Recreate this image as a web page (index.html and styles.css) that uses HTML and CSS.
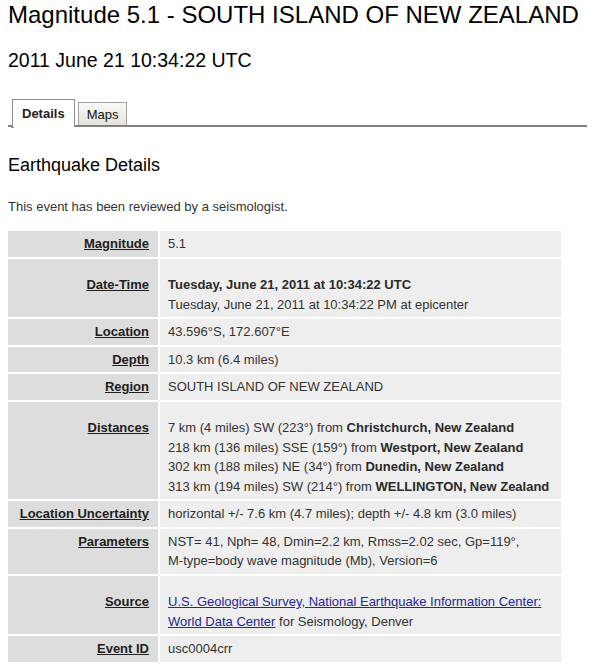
FILE: index.html
```html
<!DOCTYPE html>
<html lang="en">
<head>
<meta charset="utf-8">
<title>Magnitude 5.1 - SOUTH ISLAND OF NEW ZEALAND</title>
<link rel="stylesheet" href="styles.css">
</head>
<body>
<h1 class="title">Magnitude 5.1 - SOUTH ISLAND OF NEW ZEALAND</h1>
<h2 class="subtitle">2011 June 21 10:34:22 UTC</h2>

<div class="tabs">
  <span class="tab tab-active">Details</span>
  <span class="tab">Maps</span>
</div>

<h3 class="section">Earthquake Details</h3>
<p class="note">This event has been reviewed by a seismologist.</p>

<div class="details">
  <div class="label"><a href="#">Magnitude</a></div>
  <div class="value">5.1</div>

  <div class="label spaced"><a href="#">Date-Time</a></div>
  <div class="value spaced"><b>Tuesday, June 21, 2011 at 10:34:22 UTC</b><br>Tuesday, June 21, 2011 at 10:34:22 PM at epicenter</div>

  <div class="label"><a href="#">Location</a></div>
  <div class="value">43.596°S, 172.607°E</div>

  <div class="label"><a href="#">Depth</a></div>
  <div class="value">10.3 km (6.4 miles)</div>

  <div class="label"><a href="#">Region</a></div>
  <div class="value">SOUTH ISLAND OF NEW ZEALAND</div>

  <div class="label spaced"><a href="#">Distances</a></div>
  <div class="value spaced">7 km (4 miles) SW (223°) from <b>Christchurch, New Zealand</b><br>218 km (136 miles) SSE (159°) from <b>Westport, New Zealand</b><br>302 km (188 miles) NE (34°) from <b>Dunedin, New Zealand</b><br>313 km (194 miles) SW (214°) from <b>WELLINGTON, New Zealand</b></div>

  <div class="label"><a href="#">Location Uncertainty</a></div>
  <div class="value">horizontal +/- 7.6 km (4.7 miles); depth +/- 4.8 km (3.0 miles)</div>

  <div class="label"><a href="#">Parameters</a></div>
  <div class="value">NST= 41, Nph= 48, Dmin=2.2 km, Rmss=2.02 sec, Gp=119°,<br>M-type=body wave magnitude (Mb), Version=6</div>

  <div class="label spaced"><a href="#">Source</a></div>
  <div class="value spaced"><a class="link" href="#">U.S. Geological Survey, National Earthquake Information Center:</a><br><a class="link" href="#">World Data Center</a> for Seismology, Denver</div>

  <div class="label"><a href="#">Event ID</a></div>
  <div class="value">usc0004crr</div>
</div>
</body>
</html>
```

FILE: styles.css
```css
html, body {
  background: #ffffff;
}

body {
  margin: 0 8px;
  font-family: "Liberation Sans", Arial, sans-serif;
  font-size: 13px;
  color: #333333;
}

.title {
  margin: 0;
  padding-top: 1px;
  font-size: 24px;
  font-weight: normal;
  line-height: 28px;
  color: #000000;
}

.subtitle {
  margin: 19px 0 0;
  font-size: 19.5px;
  font-weight: normal;
  line-height: 24px;
  color: #000000;
}

.tabs {
  margin: 27px -8px 0 0;
  display: flex;
  align-items: flex-end;
  padding-left: 4px;
  border-bottom: 2px solid #808080;
  height: 26px;
}

.tab {
  display: block;
  margin-left: 3px;
  padding: 2px 8px 0;
  line-height: 20px;
  border: 1px solid #a3a3a3;
  border-bottom: none;
  background: linear-gradient(#f9f9f6, #e4e4dc);
  color: #111111;
}

.tab-active {
  position: relative;
  margin-left: 0;
  margin-bottom: -2px;
  padding: 4px 9px 3px;
  font-weight: bold;
  background: #ffffff;
  border-color: #8c8c8c;
  color: #222222;
}

.tab-active::after {
  content: "";
  position: absolute;
  left: -2px;
  bottom: -1px;
  width: 3px;
  height: 1px;
  background: #8c8c8c;
}

.section {
  margin: 27px 0 0;
  font-size: 18px;
  font-weight: normal;
  line-height: 22px;
  color: #000000;
}

.note {
  margin: 21px 0 0;
  line-height: 20px;
}

.details {
  margin-top: 14px;
  display: grid;
  grid-template-columns: 150px 401px;
  gap: 2px;
  line-height: 19.5px;
}

.label,
.value {
  padding: 3px 8px;
}

.label {
  background: #dddddd;
  text-align: right;
  padding-right: 9px;
  font-weight: bold;
}

.label a {
  color: #1e1e1e;
  text-decoration: underline;
}

.value {
  background: #eeeeee;
}

.value b {
  color: #2a2a2a;
}

.spaced {
  padding-top: 16.5px;
}

.link {
  color: #25259c;
  text-decoration: underline;
}
```
